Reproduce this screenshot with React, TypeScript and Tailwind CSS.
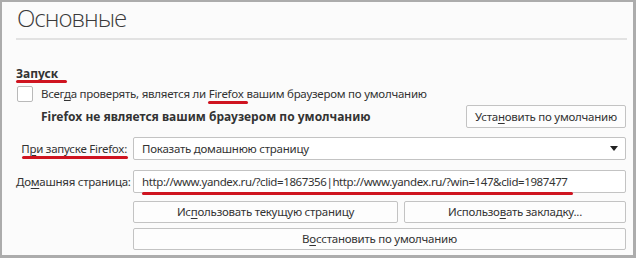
import React from "react";

const U = ({ children }: { children: React.ReactNode }) => (
  <span className="underline underline-offset-2 decoration-1">{children}</span>
);

const Red = ({ cls }: { cls: string }) => (
  <span className={"absolute h-[3px] rounded-full bg-[#cf1420] z-10 " + cls} />
);

const btn =
  "h-[22px] border border-[#c3c3c3] bg-[#fdfdfd] rounded-[2px] text-[#333] text-[11.5px] tracking-[-0.25px] whitespace-nowrap";

export default function App() {
  return (
    <div className="w-[636px] h-[258px] bg-[#acacac] pl-[2px] pt-[2px] pr-[3px] pb-[3px] font-['Noto_Sans',sans-serif] text-[11.5px] tracking-[-0.25px] text-[#333]">
      <div className="h-full bg-[#fbfbfb] pl-[14px] pr-[7px]">
        <div className="h-[32px] leading-[32px] text-[24px] font-light font-['Open_Sans','Noto_Sans',sans-serif] text-[#3a3a3a] pl-[1px] tracking-[-1px]">
          Основные
        </div>
        <div className="mt-[4px] h-[2px] bg-[#e2e2e2] mr-[-1px]" />

        <div className="mt-[26px] h-[16px] leading-[16px] text-[12px] font-bold tracking-normal relative">
          Запуск
          <Red cls="left-0 top-[14px] w-[51px]" />
        </div>

        <div className="mt-[3px] h-[17px] flex items-center">
          <div className="ml-[1px] w-[16px] h-[16px] border border-[#b9b9b9] bg-white rounded-[2px]" />
          <div className="ml-[8px] leading-[16px] whitespace-nowrap">
            Всег<U>д</U>а проверять, является ли{" "}
            <span className="relative">
              Firefox
              <Red cls="left-[-1px] top-[15px] w-[40px]" />
            </span>{" "}
            вашим браузером по умолчанию
          </div>
        </div>

        <div className="mt-[3px] h-[23px] flex items-center justify-between">
          <div className="pl-[25px] font-bold text-[12px] tracking-normal whitespace-nowrap">
            Firefox не является вашим браузером по умолчанию
          </div>
          <button className={btn + " w-[160px] h-[23px]"}>
            Уста<U>н</U>овить по умолчанию
          </button>
        </div>

        <div className="mt-[9px] h-[23px] flex items-center relative">
          <div className="w-[112px] text-right pr-[1px] whitespace-nowrap">
            П<U>р</U>и запуске Firefox:
          </div>
          <Red cls="left-[6px] top-[19px] w-[106px]" />
          <div className="ml-[5px] flex-1 h-[23px] border border-[#c3c3c3] bg-white rounded-[2px] flex items-center justify-between pl-[8px] pr-[7px]">
            <span className="whitespace-nowrap">Показать домашнюю страницу</span>
            <svg width="8" height="5" viewBox="0 0 8 5">
              <path d="M0 0h8L4 5z" fill="#222" />
            </svg>
          </div>
        </div>

        <div className="mt-[10px] h-[23px] flex items-center relative">
          <div className="w-[112px] text-right pr-[1px] whitespace-nowrap">
            До<U>м</U>ашняя страница:
          </div>
          <div className="ml-[5px] flex-1 h-[23px] border border-[#c3c3c3] bg-white rounded-[2px] flex items-center pl-[8px]">
            <span className="whitespace-nowrap tracking-[-0.4px]">
              http://www.yandex.ru/?clid=1867356|http://www.yandex.ru/?win=147&amp;clid=1987477
            </span>
          </div>
          <Red cls="left-[126px] top-[22px] w-[431px]" />
        </div>

        <div className="mt-[8px] pl-[117px] flex gap-[6px]">
          <button className={btn + " w-[265px]"}>
            Ис<U>п</U>ользовать текущую страницу
          </button>
          <button className={btn + " flex-1"}>
            Использо<U>в</U>ать закладку...
          </button>
        </div>

        <div className="mt-[5px] pl-[117px]">
          <button className={btn + " w-full"}>
            В<U>о</U>сстановить по умолчанию
          </button>
        </div>
      </div>
    </div>
  );
}
